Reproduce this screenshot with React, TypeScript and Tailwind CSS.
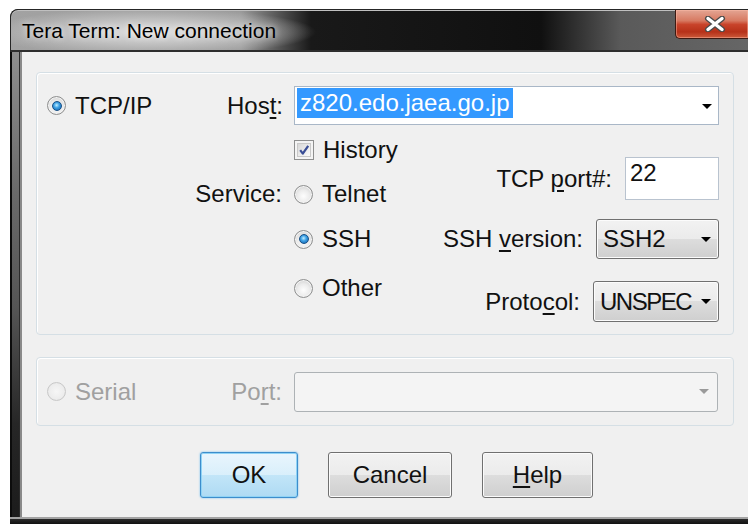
import React from "react";

function Radio({ checked = false, disabled = false }: { checked?: boolean; disabled?: boolean }) {
  return (
    <span
      className={
        disabled
          ? "flex h-[19px] w-[19px] shrink-0 items-center justify-center rounded-full border border-[#c8c8c8] bg-[radial-gradient(circle_at_50%_50%,#f6f6f6_0%,#ededed_60%,#dedede_100%)]"
          : "flex h-[19px] w-[19px] shrink-0 items-center justify-center rounded-full border border-[#8e8f8f] bg-[radial-gradient(circle_at_50%_60%,#fdfdfd_0%,#ececec_45%,#c4c4c4_100%)] shadow-[inset_0_0_0_1px_#f4f4f4]"
      }
    >
      {checked && (
        <span className="h-[10px] w-[10px] rounded-full border border-[#164f86] bg-[radial-gradient(circle_at_45%_40%,#c4efff_0%,#3ea2e6_40%,#0d5aa6_100%)]" />
      )}
    </span>
  );
}

function Checkbox() {
  return (
    <span className="flex h-[20px] w-[20px] shrink-0 items-center justify-center border border-[#8e8f8f] bg-[#f4f4f4]">
      <span className="flex h-[14px] w-[14px] items-center justify-center border border-[#c9c9c9] bg-[linear-gradient(135deg,#d8d8d8,#fbfbfb)]">
        <svg viewBox="0 0 12 12" className="h-[12px] w-[12px]">
          <path d="M2.2 6.2 L4.8 9.6 L10.2 1.8" stroke="#3a4e96" strokeWidth="2.2" fill="none" strokeLinejoin="round" />
        </svg>
      </span>
    </span>
  );
}

function Arrow({ color = "#000" }: { color?: string }) {
  return (
    <svg viewBox="0 0 10 5" className="h-[5px] w-[10px]">
      <path d="M0 0 H10 L5 5 Z" fill={color} />
    </svg>
  );
}

function DropList({ value, width, tight = false }: { value: string; width: string; tight?: boolean }) {
  return (
    <div
      className={`flex h-full items-center rounded-[3px] border border-[#707070] bg-[linear-gradient(180deg,#f2f2f2_0%,#ebebeb_50%,#dddddd_50%,#cfcfcf_100%)] pl-[6px] pr-[7px] shadow-[inset_0_0_0_1px_#fcfcfc] ${width}`}
    >
      <span className={tight ? "tracking-[-1.5px]" : ""}>{value}</span>
      <span className="ml-auto">
        <Arrow />
      </span>
    </div>
  );
}

function PushButton({ children, width, primary = false }: { children: React.ReactNode; width: string; primary?: boolean }) {
  return (
    <div
      className={
        primary
          ? `flex h-[46px] items-center justify-center rounded-[3px] border border-[#3c8dcc] bg-[linear-gradient(180deg,#e9f5fd_0%,#d9effb_50%,#c2e5f8_50%,#aedaf3_100%)] shadow-[inset_0_0_0_1px_#8fd3f5,0_0_2px_#5fb8f0] ${width}`
          : `flex h-[46px] items-center justify-center rounded-[3px] border border-[#707070] bg-[linear-gradient(180deg,#f2f2f2_0%,#ebebeb_50%,#dddddd_50%,#cfcfcf_100%)] shadow-[inset_0_0_0_1px_#fbfbfb] ${width}`
      }
    >
      {children}
    </div>
  );
}

export default function App() {
  return (
    <div className="h-[524px] w-[748px] overflow-hidden bg-white pl-[10px] pt-[9px] font-['Liberation_Sans',Arial,sans-serif] text-[24px] leading-[28px] text-[#111111]">
      {/* window */}
      <div className="flex h-[515px] w-[738px] flex-col overflow-hidden rounded-tl-[8px] bg-[#1b1b1b]">
        {/* title bar */}
        <div className="relative flex h-[43px] shrink-0 items-start rounded-tl-[8px] border-l border-t border-[#262626] bg-[image:radial-gradient(ellipse_165px_24px_at_140px_22px,rgba(228,228,228,0.95)_0%,rgba(200,200,200,0.75)_55%,rgba(160,160,160,0)_100%),linear-gradient(90deg,#a2a2a2_0px,#9a9a9a_230px,#191919_300px,#101010_530px,#5a5a5a_610px,#666666_100%)] shadow-[inset_0_-2px_0_#2e2e2e,inset_0_1px_0_#c0c0c0]">
          <span className="ml-[11px] mt-[9px] text-[21px] leading-[24px] text-black [text-shadow:0_0_6px_rgba(255,255,255,0.8)]">
            Tera Term: New connection
          </span>
          <div className="ml-auto flex h-[29px] w-[73px] items-center justify-center rounded-bl-[5px] border-b border-l border-[#3d1a12] bg-[linear-gradient(180deg,#e4a593_0%,#d77a62_38%,#c8432a_52%,#b63119_78%,#cc5a3a_100%)] pl-[6px] shadow-[inset_0_0_0_1px_rgba(255,190,170,0.45)]">
            <svg viewBox="0 0 22 16" className="h-[16px] w-[22px]">
              <path d="M4 2.5 L18 13.5 M18 2.5 L4 13.5" stroke="#4b4b4b" strokeWidth="6" strokeLinecap="round" />
              <path d="M4 2.5 L18 13.5 M18 2.5 L4 13.5" stroke="#ffffff" strokeWidth="3.4" strokeLinecap="round" />
            </svg>
          </div>
        </div>

        {/* frame + client */}
        <div className="flex h-[465px] shrink-0">
          <div className="w-[12px] shrink-0 border-l-2 border-[#0c0c0c] bg-[linear-gradient(180deg,#8e8e8e_0%,#6a6a6a_30%,#555555_55%,#262626_80%,#1c1c1c_100%)] shadow-[inset_-2px_0_0_#8a8a8a,inset_-3px_0_0_#2a2a2a]" />

          <div className="flex flex-1 flex-col bg-[#f0f0f0] pl-[14px] pt-[20px]">
            {/* TCP/IP group */}
            <div className="flex h-[263px] w-[698px] flex-col rounded-[4px] border border-[#d5dfe5] shadow-[inset_1px_1px_0_#ffffff]">
              <div className="mt-[13px] flex h-[39px] items-center">
                <div className="flex w-[257px] items-center pl-[10px]">
                  <Radio checked />
                  <span className="ml-[9px]">TCP/IP</span>
                  <span className="ml-auto mr-[11px]">
                    Hos<span className="underline underline-offset-[3px]">t</span>:
                  </span>
                </div>
                <div className="flex h-[39px] w-[425px] items-start border border-[#a9b7c7] bg-white pl-[2px] pt-[1px]">
                  <span className="bg-[#3399ff] px-[3px] leading-[30px] text-white">z820.edo.jaea.go.jp</span>
                  <span className="ml-auto mr-[6px] self-center">
                    <Arrow />
                  </span>
                </div>
              </div>

              <div className="flex">
                {/* service column */}
                <div className="flex flex-col">
                  <div className="mt-[5px] flex h-[40px] items-center">
                    <span className="w-[257px]" />
                    <Checkbox />
                    <span className="ml-[9px]">History</span>
                  </div>
                  <div className="mt-[4px] flex h-[40px] items-center">
                    <span className="w-[257px] pr-[12px] text-right">Service:</span>
                    <Radio />
                    <span className="ml-[9px]">Telnet</span>
                  </div>
                  <div className="mt-[5px] flex h-[40px] items-center">
                    <span className="w-[257px]" />
                    <Radio checked />
                    <span className="ml-[9px]">SSH</span>
                  </div>
                  <div className="mt-[9px] flex h-[40px] items-center">
                    <span className="w-[257px]" />
                    <Radio />
                    <span className="ml-[9px]">Other</span>
                  </div>
                </div>

                {/* port / version / protocol column */}
                <div className="ml-auto mr-[14px] flex flex-col items-end">
                  <div className="mt-[32px] flex h-[43px] items-center">
                    <span>
                      TCP <span className="underline underline-offset-[3px]">p</span>ort#:
                    </span>
                    <div className="ml-[13px] h-[43px] w-[94px] border border-[#b9c3cf] bg-white pl-[4px] pt-[1px]">
                      <span>22</span>
                    </div>
                  </div>
                  <div className="mt-[19px] flex h-[40px] items-center">
                    <span>
                      SSH <span className="underline underline-offset-[3px]">v</span>ersion:
                    </span>
                    <div className="ml-[13px] h-[40px]">
                      <DropList value="SSH2" width="w-[123px]" />
                    </div>
                  </div>
                  <div className="mt-[22px] flex h-[41px] items-center">
                    <span>
                      Proto<span className="underline underline-offset-[3px]">c</span>ol:
                    </span>
                    <div className="ml-[13px] h-[41px]">
                      <DropList value="UNSPEC" width="w-[126px]" tight />
                    </div>
                  </div>
                </div>
              </div>
            </div>

            {/* Serial group */}
            <div className="mt-[22px] flex h-[69px] w-[698px] items-center rounded-[4px] border border-[#d5dfe5] text-[#a0a0a0] shadow-[inset_1px_1px_0_#ffffff]">
              <div className="flex w-[257px] items-center pl-[10px]">
                <Radio disabled />
                <span className="ml-[9px]">Serial</span>
                <span className="ml-auto mr-[12px]">
                  Po<span className="underline underline-offset-[3px]">r</span>t:
                </span>
              </div>
              <div className="flex h-[40px] w-[424px] items-center rounded-[3px] border border-[#adb2b5] bg-[#f4f4f4] pr-[8px]">
                <span className="ml-auto">
                  <Arrow color="#9a9a9a" />
                </span>
              </div>
            </div>

            {/* buttons */}
            <div className="ml-[164px] mt-[26px] flex gap-[30px]">
              <PushButton primary width="w-[98px]">OK</PushButton>
              <PushButton width="w-[124px]">Cancel</PushButton>
              <PushButton width="w-[111px]">
                <span>
                  <span className="underline underline-offset-[3px]">H</span>elp
                </span>
              </PushButton>
            </div>
          </div>
        </div>

        {/* bottom frame edge */}
        <div className="h-[7px] shrink-0 border-t-2 border-[#a3a3a3] bg-[linear-gradient(180deg,#2a2a2a,#111111)]" />
      </div>
    </div>
  );
}
